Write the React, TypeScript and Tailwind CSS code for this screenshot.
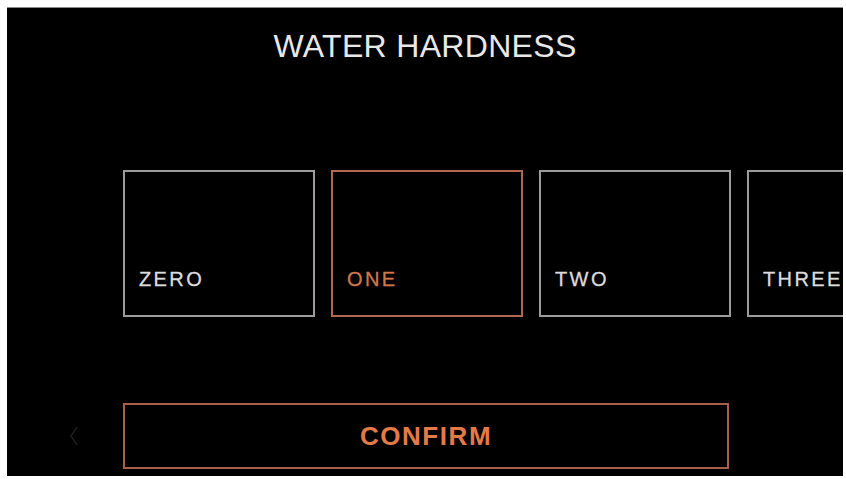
const OPTIONS = ["ZERO", "ONE", "TWO", "THREE"];

export default function App() {
  const selected = "ONE";

  return (
    <div
      className="h-[479px] w-[846px] bg-white pb-[3px] pl-[7px] pr-[3px] pt-[7px]"
      style={{ fontFamily: '"Liberation Sans", Arial, sans-serif' }}
    >
      <div className="flex h-full w-full flex-col overflow-hidden border-t border-[#8a8a8a] bg-black">
        <h1 className="pt-[18px] text-center text-[32px] font-normal leading-[40px] tracking-[0.01em] text-[#e8e8e8]">
          WATER HARDNESS
        </h1>

        <div className="mt-[104px] flex gap-4 pl-[116px]">
          {OPTIONS.map((opt) => {
            const active = opt === selected;
            return (
              <div
                key={opt}
                className={
                  active
                    ? "flex h-[147px] w-[192px] shrink-0 items-end border-2 border-[#b0684f] pb-[24px] pl-[14px]"
                    : "flex h-[147px] w-[192px] shrink-0 items-end border-2 border-[#9c9c9c] pb-[24px] pl-[14px]"
                }
              >
                <span
                  className={
                    active
                      ? "text-[20px] leading-[24px] tracking-[0.12em] text-[#d0784c] [-webkit-text-stroke:0.3px_#d0784c]"
                      : "text-[20px] leading-[24px] tracking-[0.12em] text-[#dcdcdc] [-webkit-text-stroke:0.3px_#dcdcdc]"
                  }
                >
                  {opt}
                </span>
              </div>
            );
          })}
        </div>

        <div className="mt-[86px] flex items-center">
          <svg
            width="10"
            height="20"
            viewBox="0 0 10 20"
            fill="none"
            stroke="#1e1e1e"
            strokeWidth="1.5"
            className="ml-[62px] shrink-0"
          >
            <path d="M8 1 L2 10 L8 19" />
          </svg>
          <button className="ml-[44px] flex h-[66px] w-[606px] shrink-0 items-center justify-center border-2 border-[#a9604b] text-[26px] font-bold tracking-[0.06em] text-[#e47a47]">
            CONFIRM
          </button>
        </div>
      </div>
    </div>
  );
}
